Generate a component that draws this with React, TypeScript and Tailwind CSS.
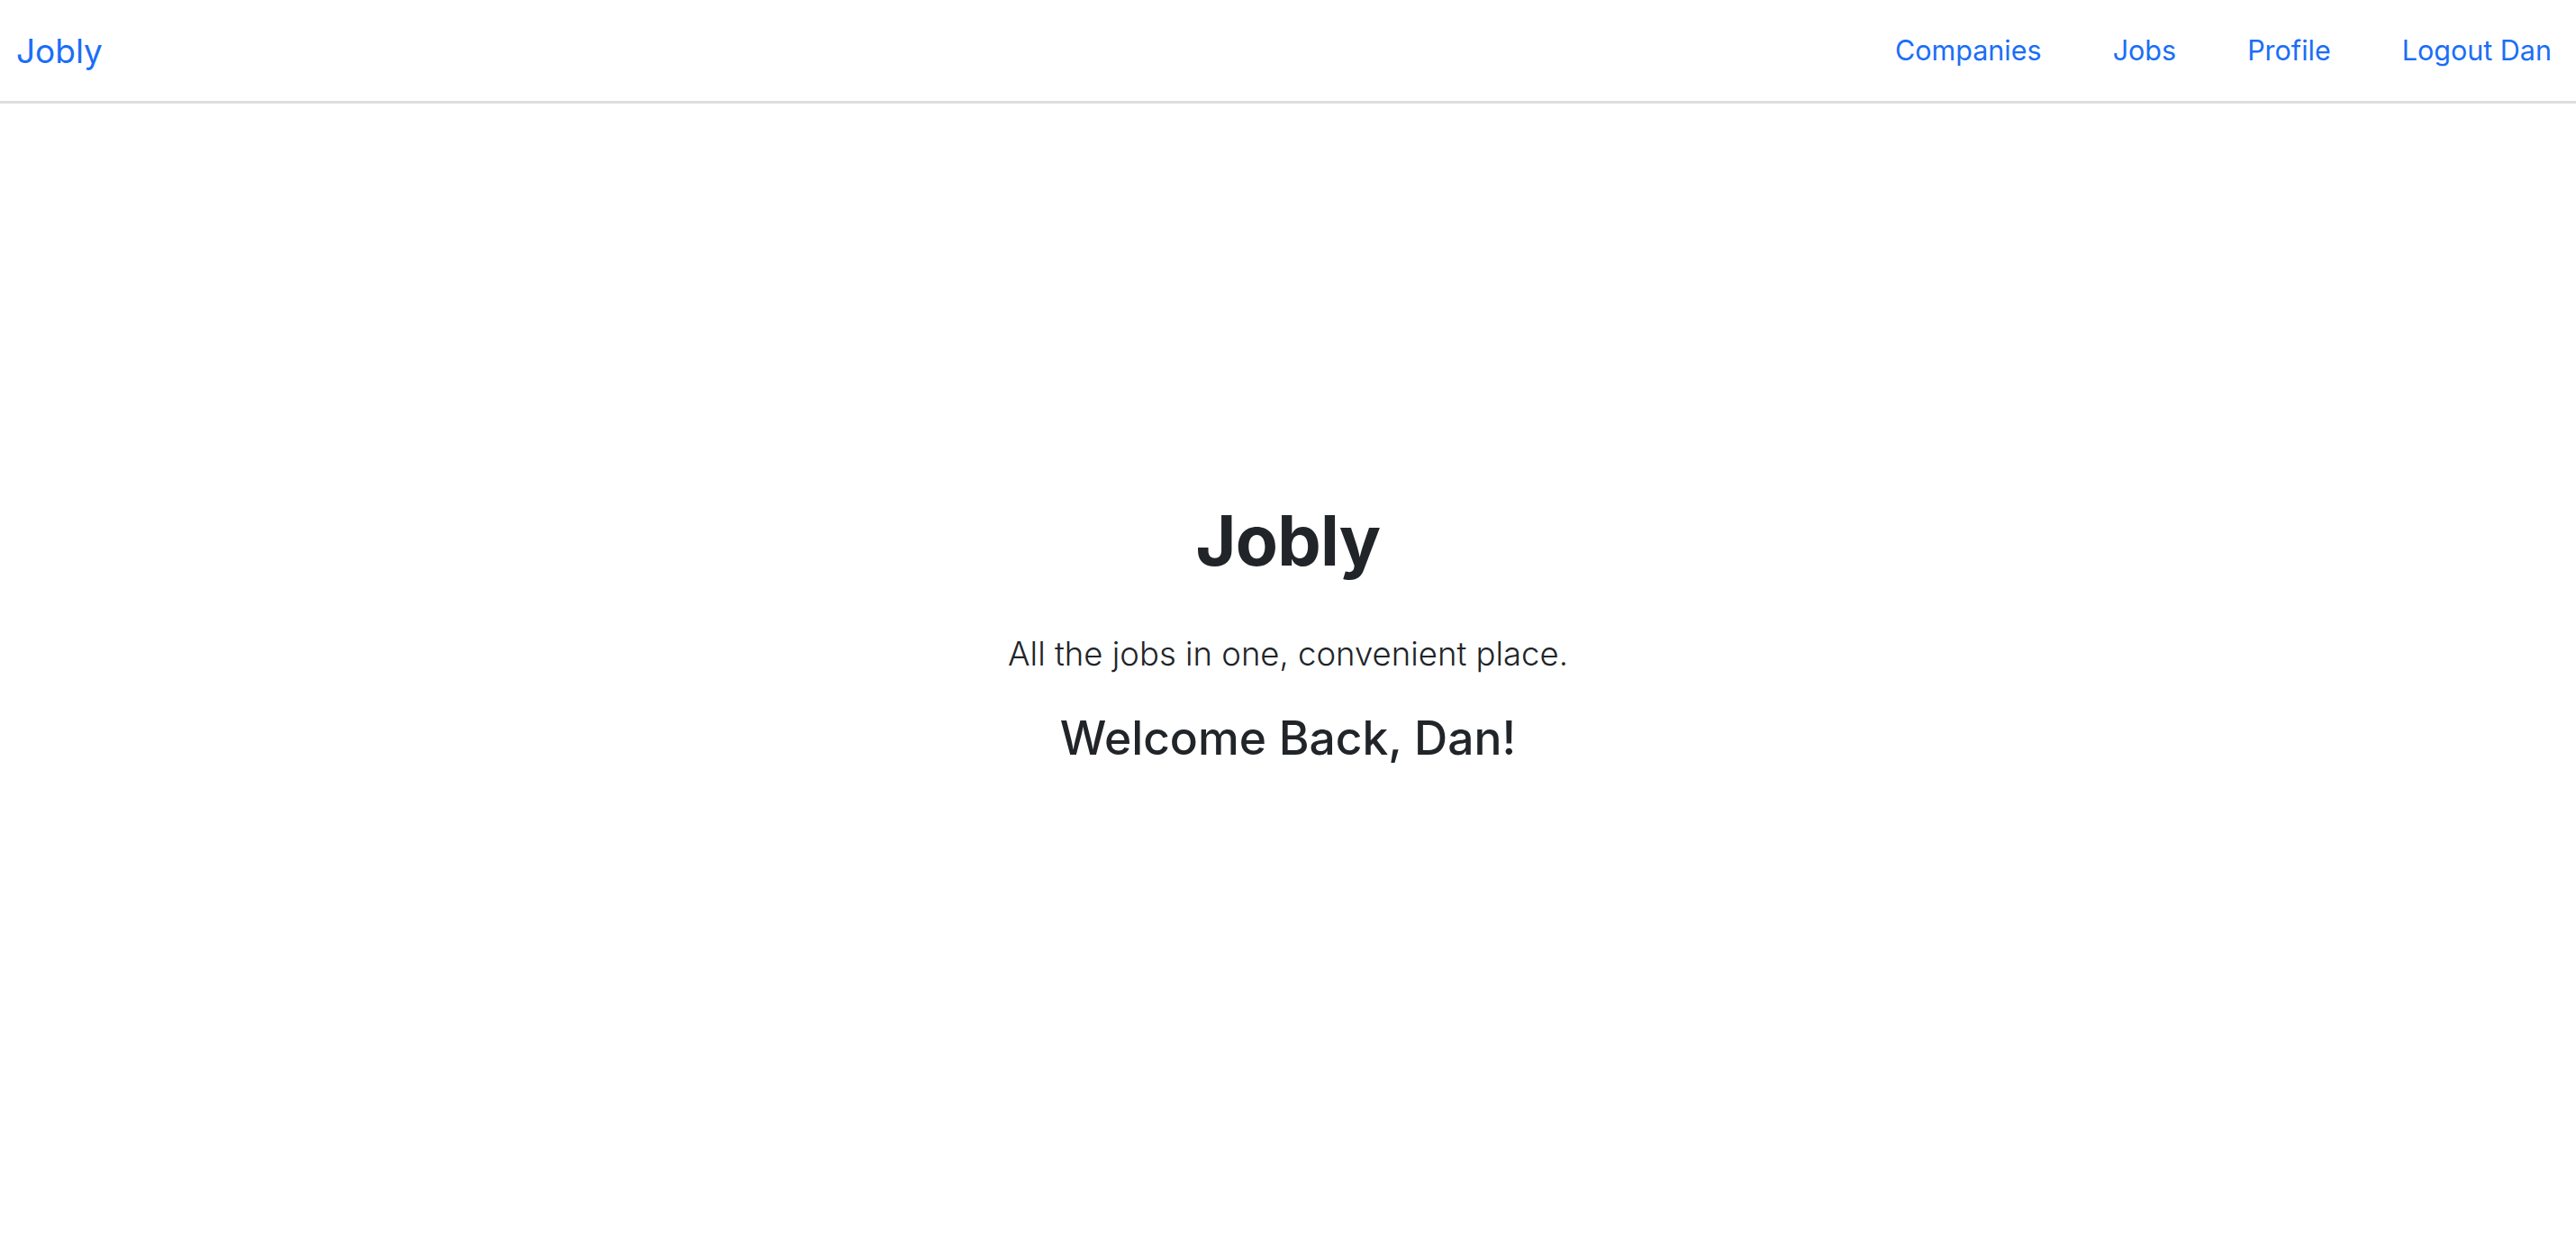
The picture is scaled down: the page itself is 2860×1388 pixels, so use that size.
import React from "react";

export default function App() {
  const font = { fontFamily: "Inter, 'Noto Sans', sans-serif" };
  return (
    <div className="min-h-[1388px] bg-white" style={font}>
      <nav className="flex h-[115px] items-center justify-between border-b-[3px] border-[#dedede] pl-[18px] pr-[27px]">
        <a className="text-[37px] leading-none text-[#1a6ef7]">Jobly</a>
        <div className="flex items-center gap-[79px] text-[30.5px] leading-none text-[#1a6ef7]">
          <a>Companies</a>
          <a>Jobs</a>
          <a>Profile</a>
          <a>Logout Dan</a>
        </div>
      </nav>
      <main className="flex flex-col items-center pt-[447px] text-[#212529]">
        <h1 className="text-[77px] font-bold leading-none tracking-[-0.01em]">Jobly</h1>
        <p className="mt-[69px] text-[36.5px] font-light leading-none">All the jobs in one, convenient place.</p>
        <h2 className="mt-[49px] text-[51.5px] font-medium leading-none">Welcome Back, Dan!</h2>
      </main>
    </div>
  );
}
